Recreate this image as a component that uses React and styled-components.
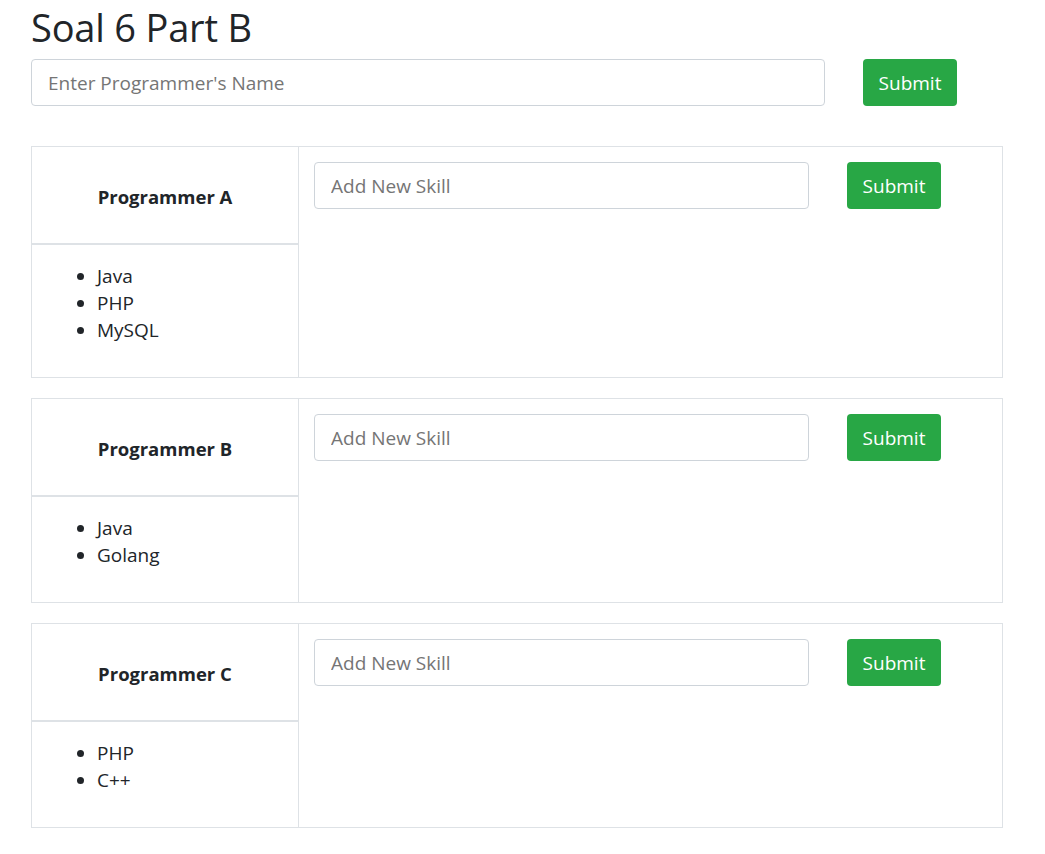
import styled, { createGlobalStyle } from "styled-components"

const programmers = [
    { name: "Programmer A", skills: ["Java", "PHP", "MySQL"] },
    { name: "Programmer B", skills: ["Java", "Golang"] },
    { name: "Programmer C", skills: ["PHP", "C++"] },
]

const App = () => {
    return (
        <Container>
            <GlobalStyle />
            <Title>Soal 6 Part B</Title>
            <FormRow $gapBottom="40px">
                <Input $width="794px" placeholder="Enter Programmer's Name" />
                <Button>Submit</Button>
            </FormRow>
            {programmers.map((p) => (
                <Card key={p.name}>
                    <NameCell>{p.name}</NameCell>
                    <SkillCell>
                        <FormRow>
                            <Input $width="495px" placeholder="Add New Skill" />
                            <Button>Submit</Button>
                        </FormRow>
                    </SkillCell>
                    <ListCell>
                        <SkillList>
                            {p.skills.map((s) => (
                                <li key={s}>{s}</li>
                            ))}
                        </SkillList>
                    </ListCell>
                </Card>
            ))}
        </Container>
    )
}

export default App

const GlobalStyle = createGlobalStyle`
    body {
        margin: 0;
        background: #fff;
        color: #212529;
        font-family: "Open Sans", "Noto Sans", sans-serif;
        font-size: 18px;
        line-height: 27px;
    }
    * {
        box-sizing: border-box;
    }
`
const Container = styled.div`
    width: 1003px;
    padding-left: 31px;
`
const Title = styled.h1`
    margin: 0 0 5px 0;
    font-size: 38px;
    font-weight: 400;
    line-height: 54px;
    letter-spacing: -0.2px;
`
const FormRow = styled.div`
    display: flex;
    align-items: center;
    gap: 38px;
    margin-bottom: ${(p) => p.$gapBottom || "0"};
`
const Input = styled.input`
    width: ${(p) => p.$width};
    height: 47px;
    padding: 0 16px;
    border: 1px solid #ced4da;
    border-radius: 4px;
    font-family: inherit;
    font-size: 19px;
    color: #495057;
    outline: none;

    ::placeholder {
        color: #6c757d;
    }
`
const Button = styled.button`
    width: 94px;
    height: 47px;
    border: none;
    border-radius: 4px;
    background-color: #28a745;
    color: white;
    font-family: inherit;
    font-size: 19px;
    cursor: pointer;
`
const Card = styled.div`
    display: grid;
    grid-template-columns: 267px 1fr;
    grid-template-rows: 98px auto;
    border: 1px solid #dee2e6;
    margin-bottom: 20px;
`
const NameCell = styled.div`
    display: flex;
    align-items: center;
    justify-content: center;
    padding-top: 3px;
    border-right: 1px solid #dee2e6;
    border-bottom: 2px solid #dee2e6;
    font-weight: 700;
    font-size: 18.5px;
`
const SkillCell = styled.div`
    grid-row: 1 / span 2;
    grid-column: 2;
    padding: 15px;
`
const ListCell = styled.div`
    border-right: 1px solid #dee2e6;
    padding: 18px 16px 16px;
`
const SkillList = styled.ul`
    margin: 0 0 17px 0;
    padding-left: 49px;
    font-size: 19px;
`
